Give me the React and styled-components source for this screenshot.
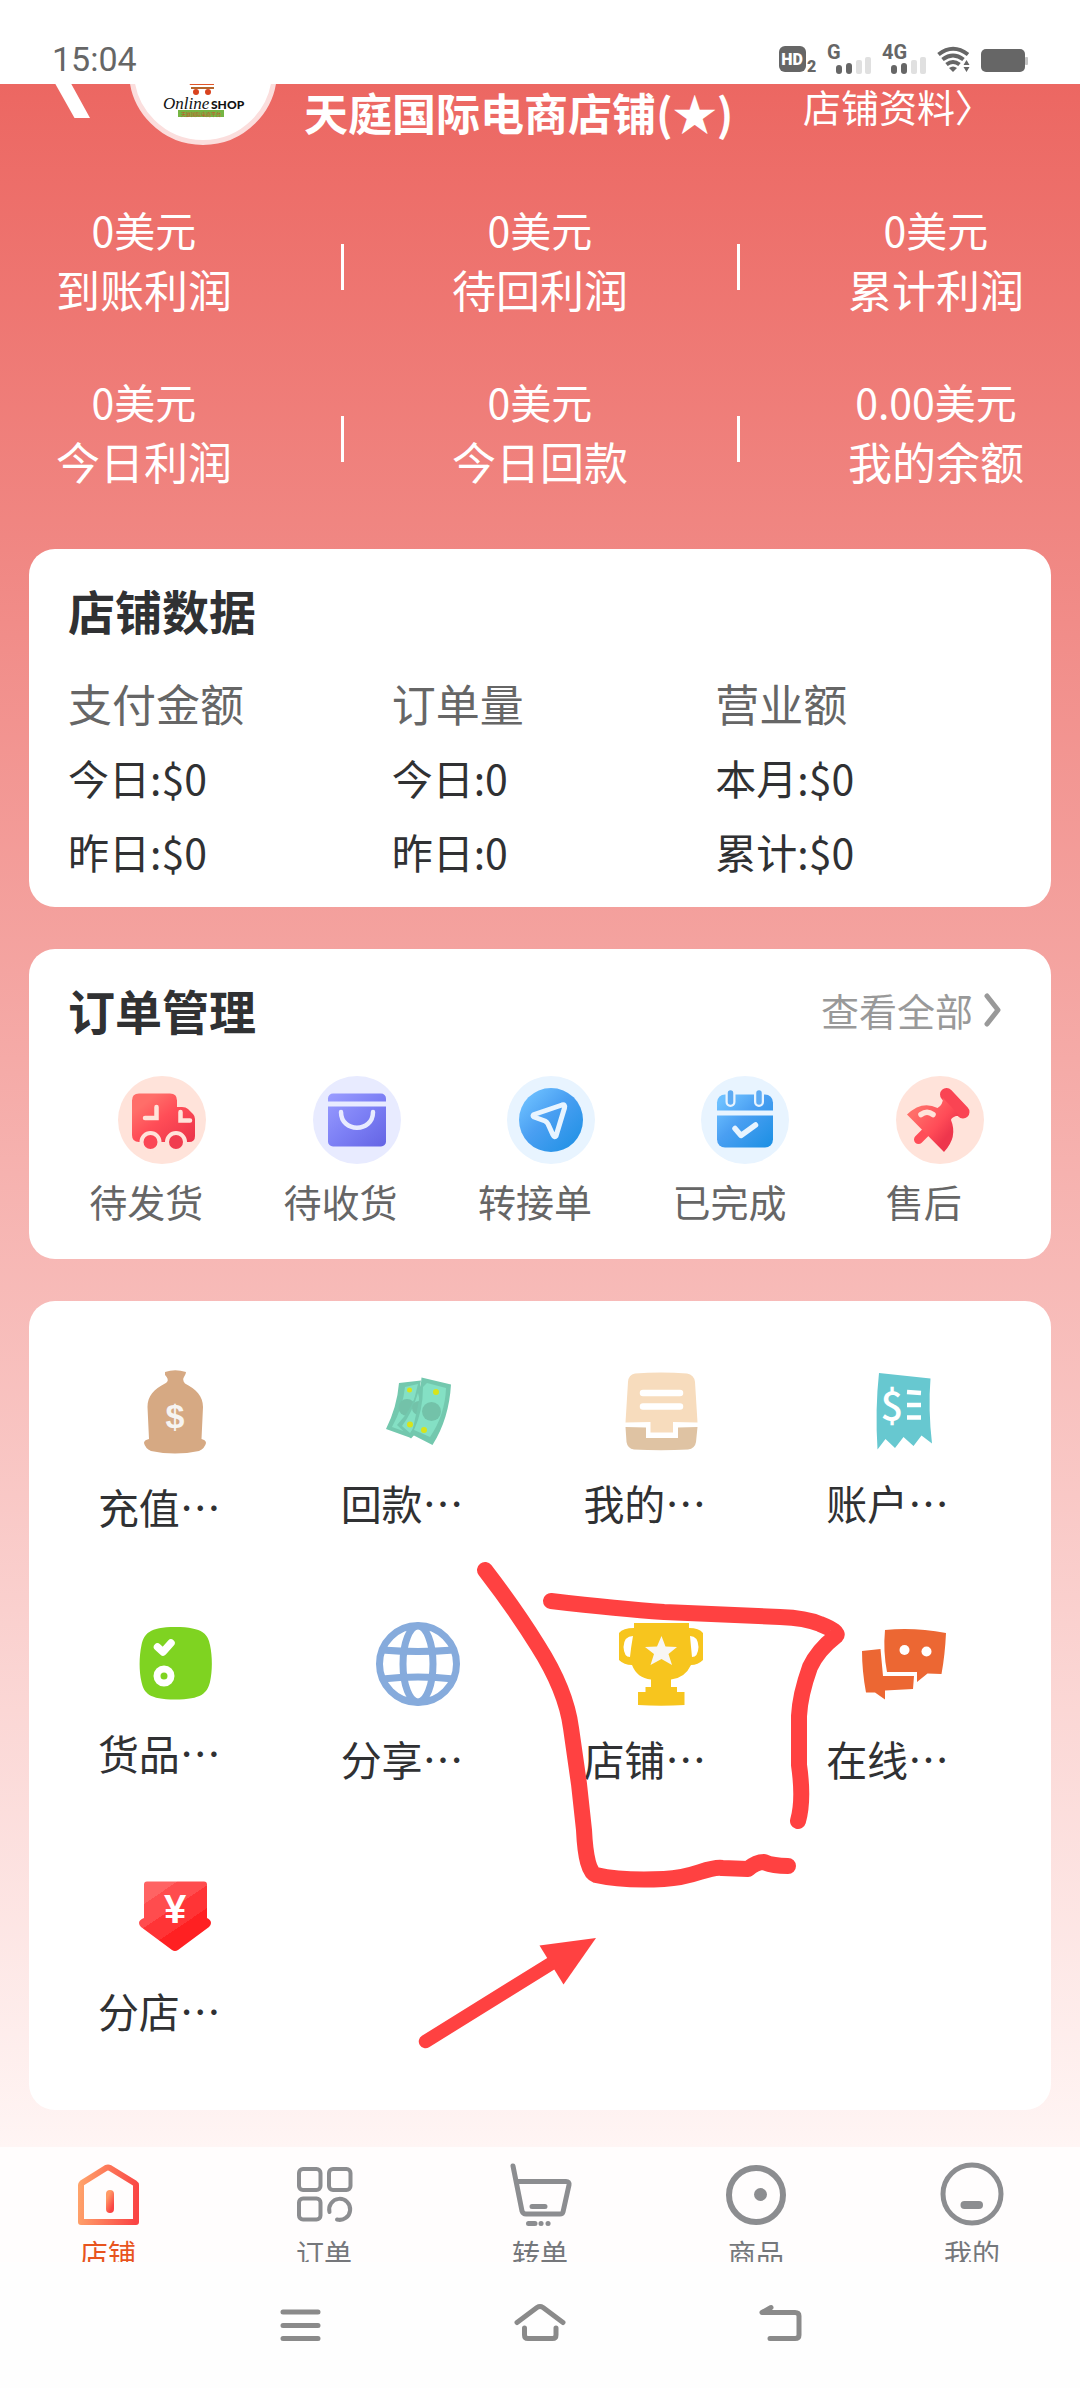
import styled, { createGlobalStyle } from 'styled-components'

const stats = [
  [
    { value: '0美元', label: '到账利润' },
    { value: '0美元', label: '待回利润' },
    { value: '0美元', label: '累计利润' },
  ],
  [
    { value: '0美元', label: '今日利润' },
    { value: '0美元', label: '今日回款' },
    { value: '0.00美元', label: '我的余额' },
  ],
]

const orders = [
  { label: '待发货', icon: TruckIcon },
  { label: '待收货', icon: BagIcon },
  { label: '转接单', icon: SendIcon },
  { label: '已完成', icon: CalendarIcon },
  { label: '售后', icon: PinIcon },
]

const tools = [
  { label: '充值…', icon: MoneyBagIcon, size: 86 },
  { label: '回款…', icon: CashIcon, size: 82 },
  { label: '我的…', icon: DrawerIcon, size: 82 },
  { label: '账户…', icon: ReceiptIcon, size: 82 },
  { label: '货品…', icon: GoodsIcon, size: 80 },
  { label: '分享…', icon: GlobeIcon, size: 86 },
  { label: '店铺…', icon: TrophyIcon, size: 86 },
  { label: '在线…', icon: ChatIcon, size: 86 },
  { label: '分店…', icon: BranchIcon, size: 86 },
]

const tabs = [
  { label: '店铺', icon: ShopTabIcon, active: true },
  { label: '订单', icon: OrderTabIcon },
  { label: '转单', icon: CartTabIcon },
  { label: '商品', icon: ProductTabIcon },
  { label: '我的', icon: MineTabIcon },
]

export default function App() {
  return (
    <>
      <GlobalStyle />
      <StatusBar />
      <Content>
        <Header>
          <BackButton aria-label="返回">
            <svg width="40" height="70" viewBox="0 0 40 70">
              <path d="M38 70H22.5L0 30 17 0H32L16 30Z" fill="#fff" />
            </svg>
          </BackButton>
          <Avatar>
            <ShopLogo />
          </Avatar>
          <ShopName>天庭国际电商店铺(★)</ShopName>
          <ShopLink href="#profile">店铺资料〉</ShopLink>
        </Header>
        <Stats>
          {stats.map((row, i) => (
            <StatsRow key={i}>
              <Stat {...row[0]} />
              <Divider />
              <Stat {...row[1]} />
              <Divider />
              <Stat {...row[2]} />
            </StatsRow>
          ))}
        </Stats>
        <Cards>
          <DataCard>
            <CardTitle>店铺数据</CardTitle>
            <DataTable>
              <thead>
                <tr>
                  <th>支付金额</th>
                  <th>订单量</th>
                  <th>营业额</th>
                </tr>
              </thead>
              <tbody>
                <tr>
                  <td>今日:$0</td>
                  <td>今日:0</td>
                  <td>本月:$0</td>
                </tr>
                <tr>
                  <td>昨日:$0</td>
                  <td>昨日:0</td>
                  <td>累计:$0</td>
                </tr>
              </tbody>
            </DataTable>
          </DataCard>
          <OrderCard>
            <CardHead>
              <CardTitle>订单管理</CardTitle>
              <MoreLink href="#orders">
                查看全部
                <svg width="20" height="36" viewBox="0 0 20 36">
                  <path d="M4 4L15 18 4 32" fill="none" stroke="#999" strokeWidth="5" strokeLinecap="round" strokeLinejoin="round" />
                </svg>
              </MoreLink>
            </CardHead>
            <OrderGrid>
              {orders.map(({ label, icon: Icon }) => (
                <OrderItem key={label}>
                  <Icon />
                  <span>{label}</span>
                </OrderItem>
              ))}
            </OrderGrid>
          </OrderCard>
          <ToolCard>
            {tools.map(({ label, icon: Icon, size }) => (
              <ToolItem key={label}>
                <Icon size={size} />
                <span>{label}</span>
              </ToolItem>
            ))}
            <Marker />
          </ToolCard>
        </Cards>
      </Content>
      <TabBar>
        {tabs.map(({ label, icon: Icon, active }) => (
          <Tab key={label} href={`#${label}`} $active={active}>
            <Icon />
            {label}
          </Tab>
        ))}
      </TabBar>
      <SystemBar>
        <SystemButton aria-label="菜单">
          <svg width="56" height="42" viewBox="0 0 56 42">
            <path d="M11 10H46M11 23.5H46M11 36.5H46" />
          </svg>
        </SystemButton>
        <SystemButton aria-label="主页">
          <svg width="56" height="42" viewBox="0 0 56 42">
            <path d="M5 20.5L25 5.5Q28 3.5 31 5.5L51 20.5M12.5 26V33Q12.5 36.5 16 36.5H40.5Q44 36.5 44 33V26" />
          </svg>
        </SystemButton>
        <SystemButton aria-label="返回上一页">
          <svg width="56" height="42" viewBox="0 0 56 42">
            <path d="M19 5.5L10 10.5H43Q47 10.5 47 14V33Q47 36.5 43 36.5H18" />
          </svg>
        </SystemButton>
      </SystemBar>
    </>
  )
}

function Stat({ value, label }) {
  return (
    <StatCell>
      <StatValue>{value}</StatValue>
      <StatLabel>{label}</StatLabel>
    </StatCell>
  )
}

function StatusBar() {
  return (
    <Status>
      <span>15:04</span>
      <StatusIcons>
        <svg width="38" height="34" viewBox="0 0 38 34">
          <rect x="0" y="4" width="27" height="26" rx="6" />
          <text x="13" y="23" fontSize="16" fontWeight="900" textAnchor="middle" style={{ fill: '#fff' }}>HD</text>
          <text x="28" y="30" fontSize="16" fontWeight="900">2</text>
        </svg>
        <Signal label="G" />
        <Signal label="4G" />
        <svg width="33" height="34" viewBox="0 0 33 34">
          <g fill="none" stroke="#666" strokeWidth="4">
            <path d="M1.500 12.500Q16 1 31 12.500" />
            <path d="M5.500 17.500Q16 9.500 26.500 17.500" />
            <path d="M9.500 22.500Q16 17.500 22.500 22.500" />
          </g>
          <path d="M12 26Q16 23 20 26L16 30Z" />
          <path d="M26.500 23L29.500 18 32.500 23ZM26.500 25L29.500 30 32.500 25Z" />
        </svg>
        <svg width="48" height="34" viewBox="0 0 48 34">
          <rect x="1" y="7" width="44" height="23" rx="5" />
          <rect x="45" y="15" width="3" height="8" rx="1" style={{ fill: '#c4c4c4' }} />
        </svg>
      </StatusIcons>
    </Status>
  )
}

function Signal({ label }) {
  return (
    <svg width="45" height="34" viewBox="0 0 45 34">
      <text x="0" y="17" fontSize="20" fontWeight="700">{label}</text>
      <rect x="9" y="23" width="6" height="9" rx="3" />
      <rect x="19" y="21" width="6" height="11" rx="3" />
      <rect x="29" y="18" width="6" height="14" rx="2" style={{ fill: '#e0e0e0' }} />
      <rect x="38" y="15" width="6" height="17" rx="2" style={{ fill: '#e0e0e0' }} />
    </svg>
  )
}

function ShopLogo() {
  return (
    <svg width="138" height="138" viewBox="5 5 138 138">
      <path d="M54 74L61 88H85V80H62" fill="#e0562a" />
      <path d="M62 91H85" stroke="#b5642c" strokeWidth="2" />
      <circle cx="67" cy="95" r="3" fill="#d9431f" />
      <circle cx="79" cy="95" r="3" fill="#d9431f" />
      <text x="34" y="112" fontSize="17" fontStyle="italic" fontFamily="Liberation Serif, serif" fill="#111">Online</text>
      <text x="82" y="112" fontSize="12" fontWeight="900" fontFamily="Lato, sans-serif" fill="#111">SHOP</text>
      <rect x="49" y="113" width="46" height="7" fill="#75b543" />
      <text x="72" y="119" fontSize="5" textAnchor="middle" fill="#c9542c">天庭国际电商平台</text>
    </svg>
  )
}

function TruckIcon() {
  return (
    <svg width="88" height="88" viewBox="0 0 88 88">
      <defs>
        <linearGradient id="truck" x1="0" y1="0" x2="1" y2="1">
          <stop offset="0.2" stopColor="#ff6e69" />
          <stop offset="0.5" stopColor="#ff4d57" />
          <stop offset="1" stopColor="#ea3248" />
        </linearGradient>
      </defs>
      <circle cx="44" cy="44" r="44" fill="#ffe3da" />
      <path d="M21 17.500H52Q59 17.500 59 24.500V31H64Q68 31 70 33L75 38Q77 40 77 43V60Q77 66 71 66H21Q14 66 14 59V24.500Q14 17.500 21 17.500Z" fill="url(#truck)" />
      <path d="M38.500 31V42H27M62.500 36V44.500H72" fill="none" stroke="#ffe3da" strokeWidth="4.500" strokeLinecap="round" />
      <circle cx="32.500" cy="66" r="9" fill="#fb4655" stroke="#ffe3da" strokeWidth="4" />
      <circle cx="58" cy="66" r="9" fill="#f03d4f" stroke="#ffe3da" strokeWidth="4" />
    </svg>
  )
}

function BagIcon() {
  return (
    <svg width="88" height="88" viewBox="0 0 88 88">
      <defs>
        <linearGradient id="bag" x1="0" y1="0" x2="1" y2="1">
          <stop offset="0" stopColor="#9a9dff" />
          <stop offset="0.500" stopColor="#7d80f5" />
          <stop offset="1" stopColor="#6464e4" />
        </linearGradient>
      </defs>
      <circle cx="44" cy="44" r="44" fill="#e8ebff" />
      <rect x="15" y="17.500" width="58" height="53" rx="5" fill="url(#bag)" />
      <path d="M15 28H73" stroke="#e8ebff" strokeWidth="5" />
      <path d="M28 36C28 57 60 57 60 36" fill="none" stroke="#e8ebff" strokeWidth="4.500" strokeLinecap="round" />
    </svg>
  )
}

function SendIcon() {
  return (
    <svg width="88" height="88" viewBox="0 0 88 88">
      <defs>
        <linearGradient id="blue" x1="0" y1="0" x2="1" y2="1">
          <stop offset="0.100" stopColor="#6dc0ff" />
          <stop offset="0.450" stopColor="#4a9ff2" />
          <stop offset="1" stopColor="#1a8fe3" />
        </linearGradient>
      </defs>
      <circle cx="44" cy="44" r="44" fill="#e8f4ff" />
      <circle cx="44" cy="44" r="32" fill="url(#blue)" />
      <path d="M27 38.500L55 29Q58.500 28 57.500 32L49 60Q47.500 62 46 59L41 48Q40 46 38 45L27 41Q25 39.500 27 38.500Z" fill="none" stroke="#e8f4ff" strokeWidth="5" strokeLinejoin="round" />
    </svg>
  )
}

function CalendarIcon() {
  return (
    <svg width="88" height="88" viewBox="0 0 88 88">
      <circle cx="44" cy="44" r="44" fill="#e8f4ff" />
      <rect x="16" y="18.500" width="56" height="53" rx="8" fill="url(#blue)" />
      <path d="M16 37H72" stroke="#e8f4ff" strokeWidth="5" />
      <path d="M29.500 18V26M58 18V26" stroke="#e8f4ff" strokeWidth="10" strokeLinecap="round" />
      <path d="M29.500 17V26M58 17V26" stroke="#5eabf3" strokeWidth="5.500" strokeLinecap="round" />
      <path d="M34 52.500L40 59.500 54.500 49" fill="none" stroke="#e8f4ff" strokeWidth="5.500" strokeLinecap="round" strokeLinejoin="round" />
    </svg>
  )
}

function PinIcon() {
  return (
    <svg width="88" height="88" viewBox="0 0 88 88">
      <defs>
        <linearGradient id="pin" gradientUnits="userSpaceOnUse" x1="18" y1="24" x2="62" y2="60">
          <stop offset="0.150" stopColor="#ff6e69" />
          <stop offset="0.400" stopColor="#ff5a5f" />
          <stop offset="0.600" stopColor="#ff4b57" />
          <stop offset="0.850" stopColor="#ee364c" />
        </linearGradient>
      </defs>
      <circle cx="44" cy="44" r="44" fill="#ffe3da" />
      <path d="M22.500 63.500L34 52" stroke="#ff4d58" strokeWidth="9" strokeLinecap="round" />
      <path d="M50.500 18.500L67 36" stroke="#fa4453" strokeWidth="13" strokeLinecap="round" />
      <path d="M47 22Q47 29 41.500 32 26 24 11 38.500L48 76Q62 61 55 44 55 42 60 40 64 40 62 38Z" fill="url(#pin)" />
      <path d="M25 38.500Q31 34 37 38.500" fill="none" stroke="#ffe3da" strokeWidth="5.500" strokeLinecap="round" />
    </svg>
  )
}

function MoneyBagIcon({ size }) {
  return (
    <svg width="86" height={size} viewBox={`0 0 86 ${size}`}>
      <path
        d="M33 3Q43 -.5 54 3 54 5 52 8 50 11 53 14.500C64 20 71 27 71 38L69.500 70Q74 71 74 74 73 79 67 82 43 87 19 82 13 79 12 74 12 71 17 70L15.500 38C15.500 27 22 20 33 14.500 38 12 35 8 33 6 33 3Z"
        fill="#d6a983"
      />
      <text x="43" y="59" fontSize="34" fontWeight="700" fontFamily="Liberation Sans, sans-serif" textAnchor="middle" fill="#f6f4f2">$</text>
    </svg>
  )
}

function CashIcon({ size }) {
  return (
    <svg width="86" height={size} viewBox={`0 0 86 ${size}`}>
      <path d="M24 14L46 11.500 36 69 11 60Q22 38 24 14Z" fill="#73c8ae" />
      <path d="M30 18L43 15 31 63 17 58Q28 38 30 18Z" fill="#84e0c4" />
      <circle cx="32" cy="38.500" r="8.500" fill="#73c2a9" />
      <circle cx="34.500" cy="21" r="2.500" fill="#d8e41a" />
      <path d="M45 14Q38 40 22 56L36 69.500 54 50Z" fill="#73c8ae" />
      <path d="M43 24Q37 44 27 57L35 64 48 45Z" fill="#84e0c4" />
      <circle cx="44" cy="39" r="7" fill="#73c2a9" />
      <circle cx="35" cy="55.500" r="3" fill="#d8e41a" />
      <path d="M46.500 8.500L76 15.500Q74 50 57.500 76L36 65Q38 60 40 50 45 30 46.500 8.500Z" fill="#73c8ae" />
      <path d="M52 14L71 19Q70 46 55 68L39 61Q48 42 48 18Z" fill="#84e0c4" />
      <circle cx="56.500" cy="42.500" r="9.500" fill="#73c2a9" />
      <circle cx="61" cy="23" r="3" fill="#d8e41a" />
      <circle cx="49" cy="61" r="3" fill="#d8e41a" />
    </svg>
  )
}

function DrawerIcon({ size }) {
  return (
    <svg width="86" height={size} viewBox={`0 0 86 ${size}`}>
      <path d="M17 4.500Q43 2.500 69 4.500 76 5.500 77 13L79.500 53.500 55 53V63.500H32.500V53L7.500 53.500 10 13Q10.500 5.500 17 4.500Z" fill="#f7dcbd" />
      <path d="M7.500 58L28 58.500V69H60V58.500L79.500 58 78 73Q77 79.500 70 80.500 43 82 16 80.500 9.500 79.500 8.500 73Z" fill="#dfc3a3" />
      <path d="M25 24H62M25 37.500H62" stroke="#fff" strokeWidth="6.500" strokeLinecap="round" />
    </svg>
  )
}

function ReceiptIcon({ size }) {
  return (
    <svg width="86" height={size} viewBox={`0 0 86 ${size}`}>
      <path d="M18 4L69.500 9.500Q67 40 71 74.500L60.500 66.500 52.500 77 42.500 68 34 79 24.500 70 16.500 80.500Q14 40 18 4Z" fill="#67c8d0" />
      <text x="31" y="51" fontSize="40" fontFamily="Noto Sans CJK SC, sans-serif" fontWeight="500" textAnchor="middle" fill="#fff">$</text>
      <path d="M46 23L60 24M46 36H60M46 48.500H60" stroke="#fff" strokeWidth="4.500" />
    </svg>
  )
}

function GoodsIcon({ size }) {
  return (
    <svg width="86" height={size} viewBox={`0 0 86 ${size}`}>
      <path d="M43 6C72 6 76 14 78 24 80.500 36 80.500 50 78 61 75 72 70 78.500 43 78.500 17 78.500 12 72 9.500 61 7 50 7 36 9.500 24 12 13 17 6 43 6Z" fill="#7fd321" />
      <path d="M25.500 26L31 31 39 22" fill="none" stroke="#fff" strokeWidth="7.500" strokeLinecap="round" strokeLinejoin="round" />
      <circle cx="32" cy="55" r="7" fill="none" stroke="#fff" strokeWidth="7" />
    </svg>
  )
}

function GlobeIcon({ size }) {
  return (
    <svg width="86" height={size} viewBox={`0 0 86 ${size}`}>
      <g fill="none" stroke="#86abdc" strokeWidth="7">
        <circle cx="43" cy="43" r="38.500" />
        <ellipse cx="43" cy="43" rx="15" ry="38" />
        <path d="M7 29Q43 32 79 29M7 58Q43 54 79 58" />
      </g>
    </svg>
  )
}

function TrophyIcon({ size }) {
  return (
    <svg width="86" height={size} viewBox={`0 0 86 ${size}`}>
      <path d="M16 2H71V7Q81 7 85 12V39Q80 44 73 44 67 57 53 58.500V66H59V71H66.500V84Q43 85.500 20 84V71H27.500V66H33V58.500Q19 57 14 44 6 44 1 39V12Q5 7 16 7Z" fill="#f7c51e" />
      <path d="M15 15Q6 15 5.500 26 6 36 12 36 13 26 15 15ZM72 15Q80 15 80.500 26 80 36 74 36 73 26 72 15Z" fill="#fff" />
      <path d="M43.500 15L47.500 25.500 59 26 50.500 33 54 44 43.500 38 32.500 44 36 33 27 26 39 25.500Z" fill="#f8f6f4" />
    </svg>
  )
}

function ChatIcon({ size }) {
  return (
    <svg width="86" height={size} viewBox={`0 0 86 ${size}`}>
      <g fill="#ec6733">
        <path d="M1 30L19.500 28 22 55H53L52 68 24 69.500V78.500L14 71.500H5Q1 50 1 30Z" />
        <path d="M24 9Q53 6 85 12 84 34 80.500 53L66.500 52.500 56 61V51H26Q22 30 24 9Z" />
      </g>
      <circle cx="43.500" cy="29" r="5" fill="#fff" />
      <circle cx="65.500" cy="30.500" r="5" fill="#fff" />
    </svg>
  )
}

function BranchIcon({ size }) {
  return (
    <svg width="86" height={size} viewBox={`0 0 86 ${size}`}>
      <defs>
        <linearGradient id="branch" x1="0" y1="0" x2="0.700" y2="1">
          <stop offset="0.250" stopColor="#ff6363" />
          <stop offset="0.250" stopColor="#ff4c4e" />
          <stop offset="0.480" stopColor="#ff4c4e" />
          <stop offset="0.480" stopColor="#ff3436" />
          <stop offset="0.700" stopColor="#ff3436" />
          <stop offset="0.700" stopColor="#ff2022" />
        </linearGradient>
      </defs>
      <path d="M15 8.500H72Q75 8.500 75 11.500V45Q79 47 79 50 79 52 77 54L46 77Q43 79 40 77L9 54Q7 52 7 50 7 47 12 45V11.500Q12 8.500 15 8.500Z" fill="url(#branch)" />
      <text x="43" y="50" fontSize="40" fontWeight="700" fontFamily="Liberation Sans, sans-serif" textAnchor="middle" fill="#fff">¥</text>
    </svg>
  )
}

function ShopTabIcon() {
  return (
    <svg width="64" height="64" viewBox="0 0 64 64">
      <defs>
        <linearGradient id="shop" gradientUnits="userSpaceOnUse" x1="2" y1="30" x2="62" y2="36">
          <stop offset="0" stopColor="#ffa46b" />
          <stop offset="1" stopColor="#fa4444" />
        </linearGradient>
        <linearGradient id="door" gradientUnits="userSpaceOnUse" x1="30" y1="38" x2="38" y2="42">
          <stop offset="0" stopColor="#ff9a66" />
          <stop offset="1" stopColor="#fa4444" />
        </linearGradient>
      </defs>
      <path d="M5 23Q5 22 6 21L30 6Q32 5 34 6L58.500 21Q60 22 60 23V60H5Z" fill="none" stroke="url(#shop)" strokeWidth="6" strokeLinejoin="round" />
      <path d="M34 32V47" stroke="url(#door)" strokeWidth="8" strokeLinecap="round" />
    </svg>
  )
}

function OrderTabIcon() {
  return (
    <svg width="64" height="64" viewBox="0 0 64 64">
      <g fill="none" stroke="#8c8d90" strokeWidth="4" strokeLinecap="round">
        <rect x="7" y="7" width="21.500" height="21" rx="4" />
        <rect x="37" y="7" width="21.500" height="21" rx="4" />
        <rect x="7" y="36.500" width="21.500" height="21" rx="4" />
        <path d="M37.500 50A10.500 10.500 0 1 1 45 57.500" />
      </g>
    </svg>
  )
}

function CartTabIcon() {
  return (
    <svg width="64" height="64" viewBox="0 0 64 64">
      <g fill="none" stroke="#8c8d90" strokeWidth="5" strokeLinecap="round" strokeLinejoin="round">
        <path d="M5 4L14 49Q15 52 18 52H52Q54.500 52 55 50L61 23Q61.500 19.500 58 19.500H9M24 44.500H37M20.500 61.500H27" />
        <path d="M33 61.500H33.100M40 61.500H40.100" />
      </g>
    </svg>
  )
}

function ProductTabIcon() {
  return (
    <svg width="64" height="64" viewBox="0 0 64 64">
      <circle cx="32" cy="33" r="27" fill="none" stroke="#8c8d90" strokeWidth="6" />
      <circle cx="36.500" cy="32.500" r="6.500" fill="#8c8d90" />
    </svg>
  )
}

function MineTabIcon() {
  return (
    <svg width="64" height="64" viewBox="0 0 64 64">
      <circle cx="32" cy="32" r="29" fill="none" stroke="#8c8d90" strokeWidth="5" />
      <path d="M24.500 43H39" stroke="#8c8d90" strokeWidth="8" strokeLinecap="round" />
    </svg>
  )
}

// hand-drawn frame around the shop tool and the arrow under it
function Marker() {
  return (
    <MarkerLayer width="440" height="520" viewBox="409 1541 440 520">
      <g fill="none" stroke="#ff4141" strokeWidth="16" strokeLinecap="round" strokeLinejoin="round">
        <path d="M485 1570Q515 1609 538 1646 566 1690 571 1728L579 1784 584 1830Q586 1872 596 1875 622 1881 664 1879 682 1878 700 1872 716 1867 722 1868L748 1869Q756 1862 764 1862 772 1866 788 1866" />
        <path d="M551 1601Q620 1609 664 1612L780 1617Q806 1618 820 1624 840 1632 836 1636 818 1650 810 1667 800 1695 799 1716V1765Q804 1800 798 1821" />
      </g>
      <path d="M425.500 2041.500L552 1963" stroke="#ff4141" strokeWidth="13.500" strokeLinecap="round" />
      <path d="M596 1938L539.500 1945.500 563.500 1984.500Z" fill="#ff4141" />
    </MarkerLayer>
  )
}

const GlobalStyle = createGlobalStyle`
  * {
    box-sizing: border-box;
  }

  body {
    margin: 0;
    background: #fefefe;
    font-family: 'Noto Sans CJK SC', sans-serif;
    color: #303133;
  }

  svg {
    display: block;
    flex-shrink: 0;
  }

  a {
    color: inherit;
    text-decoration: none;
  }

  button {
    border: 0;
    padding: 0;
    background: none;
    font: inherit;
    color: inherit;
  }
`

const Status = styled.header`
  display: flex;
  justify-content: space-between;
  height: 84px;
  padding: 34px 52px 0;
  background: #fff;
  font-family: Roboto, sans-serif;
  font-size: 34px;
  line-height: 50px;
  color: #666;
`

const StatusIcons = styled.div`
  display: flex;
  align-items: flex-start;
  gap: 10px;
  padding-top: 8px;

  & svg {
    fill: #666;
    overflow: visible;
  }
`

const Content = styled.main`
  overflow: hidden;
  padding-bottom: 37px;
  background: linear-gradient(#ec6762, #fff5f4);
`

/* the page is scrolled a little, so the header sits partly above the fold */
const Header = styled.div`
  display: flex;
  align-items: flex-end;
  margin-top: -87px;
  padding: 0 87px 0 52px;
  color: #fff;
`

const BackButton = styled.button`
  padding-bottom: 27px;
`

const Avatar = styled.div`
  width: 148px;
  height: 148px;
  margin: 0 27px 0 37px;
  border: 5px solid #fbdedd;
  border-radius: 50%;
  background: #fff;
  overflow: hidden;
`

const ShopName = styled.h1`
  margin: 0;
  padding-bottom: 6px;
  font-size: 44px;
  font-weight: 700;
  line-height: 54px;
  white-space: nowrap;
`

const ShopLink = styled.a`
  margin-left: auto;
  padding-bottom: 12px;
  font-size: 38px;
  line-height: 54px;
  white-space: nowrap;
`

const Stats = styled.section`
  display: flex;
  flex-direction: column;
  gap: 39px;
  padding: 55px 28px 44px;
`

const StatsRow = styled.div`
  display: flex;
  align-items: center;
  justify-content: space-between;
`

const StatCell = styled.div`
  width: 232px;
  padding-bottom: 13px;
  text-align: center;
  color: #fff;
`

const StatValue = styled.div`
  font-size: 41px;
  line-height: 58px;
`

const StatLabel = styled.div`
  font-size: 44px;
  line-height: 62px;
`

const Divider = styled.div`
  width: 3px;
  height: 46px;
  background: #fff;
`

const Cards = styled.div`
  display: flex;
  flex-direction: column;
  gap: 42px;
  padding: 0 29px;
`

const Card = styled.section`
  border-radius: 26px;
  background: #fff;
`

const DataCard = styled(Card)`
  padding: 31px 12px 19px 39px;
`

const OrderCard = styled(Card)`
  padding: 31px 30px 31px 20px;
`

const CardTitle = styled.h2`
  margin: 0;
  font-size: 47px;
  font-weight: 700;
  line-height: 60px;
`

const DataTable = styled.table`
  width: 100%;
  margin-top: 26px;
  border-collapse: collapse;
  table-layout: fixed;
  text-align: left;
  line-height: 74px;

  & th {
    padding: 0;
    font-size: 44px;
    font-weight: 400;
    color: #666;
  }

  & td {
    padding: 0;
    font-size: 41px;
  }
`

const CardHead = styled.div`
  display: flex;
  align-items: center;
  justify-content: space-between;
  padding: 0 18px 0 19px;
`

const MoreLink = styled.a`
  display: flex;
  align-items: center;
  gap: 10px;
  font-size: 38px;
  line-height: 54px;
  color: #999;
`

const OrderGrid = styled.div`
  display: grid;
  grid-template-columns: repeat(5, 1fr);
  margin-top: 36px;
`

const Item = styled.button`
  display: flex;
  flex-direction: column;
  align-items: center;
  line-height: 54px;

  & svg {
    margin-left: 32px;
  }
`

const OrderItem = styled(Item)`
  gap: 10px;
  font-size: 38px;
  color: #666;
`

const ToolCard = styled(Card)`
  position: relative;
  display: grid;
  grid-template-columns: repeat(4, 1fr);
  row-gap: 88px;
  padding: 68px 42px 73px 9px;
`

const ToolItem = styled(Item)`
  gap: 24px;
  font-size: 41px;
`

const MarkerLayer = styled.svg`
  position: absolute;
  left: 380px;
  top: 240px;
  pointer-events: none;
`

const TabBar = styled.nav`
  display: flex;
  height: 115px;
  overflow: hidden;
  background: #fffdfd;
`

const Tab = styled.a`
  display: flex;
  flex: 1;
  flex-direction: column;
  align-items: center;
  gap: 7px;
  padding-top: 15px;
  font-size: 28px;
  line-height: 40px;
  color: ${({ $active }) => ($active ? '#e8541e' : '#75777b')};
`

const SystemBar = styled.footer`
  display: flex;
  justify-content: center;
  gap: 184px;
  padding: 40px 0 44px;
`

const SystemButton = styled.button`
  & svg {
    fill: none;
    stroke: #8a8a8a;
    stroke-width: 5;
    stroke-linecap: round;
    stroke-linejoin: round;
  }
`
